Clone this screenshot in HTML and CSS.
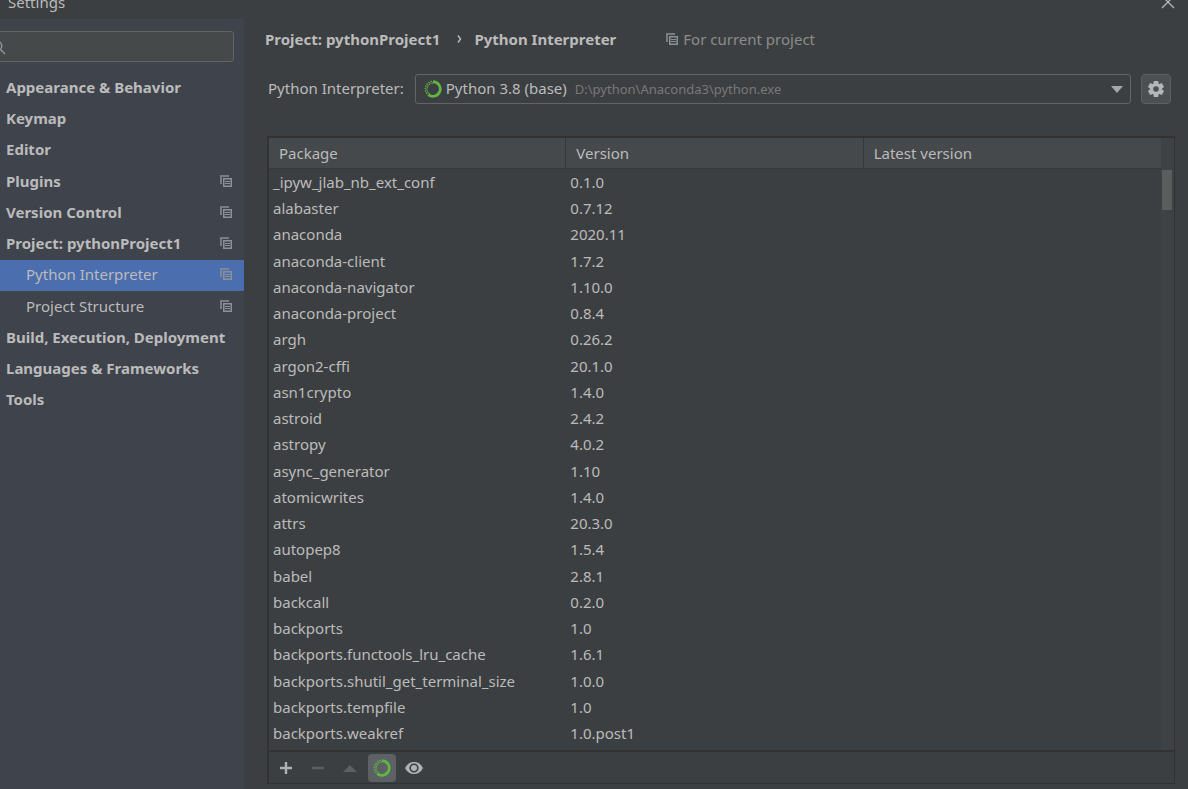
FILE: index.html
```
<!DOCTYPE html>
<html lang="en">
<head>
<meta charset="utf-8">
<title>Settings</title>
<link rel="stylesheet" href="styles.css">
</head>
<body>
<svg class="defs" aria-hidden="true">
  <symbol id="copy" viewBox="0 0 12 12">
    <path d="M0 0h9v2H2v7H0z" opacity=".75"/>
    <path d="M3 3h9v9H3zM4.500 4.500v6h6v-6z" fill-rule="evenodd"/>
    <path d="M5 6h5v1H5zM5 8h5v1H5z"/>
  </symbol>
  <symbol id="ring" viewBox="0 0 18 18">
    <g fill="none" stroke="#62b543">
      <path d="M9 1.700A7.300 7.300 0 1 1 4.500 14.800" stroke-width="2.800"/>
      <path d="M4.200 15A7.700 7.700 0 0 1 9 1.300" stroke-width="1.500" stroke-linecap="round" stroke-dasharray=".1 2.300"/>
      <path d="M5.400 13.800A6 6 0 0 1 9 3" stroke-width="1.300" stroke-linecap="round" stroke-dasharray=".1 1.700"/>
    </g>
  </symbol>
</svg>
<header class="titlebar">
  <h1 class="title">Settings</h1>
  <button class="close" type="button" aria-label="Close"><svg width="14" height="14" viewBox="0 0 14 14"><path d="M1 1l12 12M13 1L1 13" stroke="#b4b7b9" stroke-width="1.300"/></svg></button>
</header>
<div class="window">
  <aside class="sidebar">
    <div class="search">
      <svg class="search-icon" width="16" height="16" viewBox="0 0 16 16" fill="none" stroke="#8b979c" stroke-width="1.500"><circle cx="6" cy="6" r="4.700"/><path d="M9.500 9.500l4.500 4.500"/></svg>
      <input class="search-input" type="text" aria-label="Search settings">
    </div>
    <nav class="nav">
      <a class="item" href="#">Appearance &amp; Behavior</a>
      <a class="item" href="#">Keymap</a>
      <a class="item" href="#">Editor</a>
      <a class="item" href="#">Plugins<svg class="copy"><use href="#copy"/></svg></a>
      <a class="item" href="#">Version Control<svg class="copy"><use href="#copy"/></svg></a>
      <a class="item" href="#">Project: pythonProject1<svg class="copy"><use href="#copy"/></svg></a>
      <a class="item child selected" href="#" aria-current="page">Python Interpreter<svg class="copy"><use href="#copy"/></svg></a>
      <a class="item child" href="#">Project Structure<svg class="copy"><use href="#copy"/></svg></a>
      <a class="item" href="#">Build, Execution, Deployment</a>
      <a class="item" href="#">Languages &amp; Frameworks</a>
      <a class="item" href="#">Tools</a>
    </nav>
  </aside>
  <main class="main">
    <div class="crumbs">
      <a class="crumb" href="#">Project: pythonProject1</a>
      <svg class="chevron" width="5" height="10" viewBox="0 0 5 10"><path d="M1 1.500L3.500 5L1 8.500" fill="none" stroke="#bbb" stroke-width="1.400"/></svg>
      <h2 class="crumb">Python Interpreter</h2>
      <span class="scope"><svg class="copy"><use href="#copy"/></svg>For current project</span>
    </div>
    <div class="interpreter">
      <label class="label" for="interp">Python Interpreter:</label>
      <div class="combo">
        <select class="select" id="interp"><option>Python 3.8 (base)</option></select>
        <svg class="ring combo-ring"><use href="#ring"/></svg>
        <span class="path">D:\python\Anaconda3\python.exe</span>
        <svg class="arrow" width="12" height="7" viewBox="0 0 12 7"><path d="M0 0h12L6 7z" fill="#a4a7a9"/></svg>
      </div>
      <button class="gear" type="button" aria-label="Interpreter settings"><svg width="18" height="18" viewBox="-9 -9 18 18"><g fill="#b4b7b9"><path id="tooth" d="M-2.200-8h4.400l.6 4h-5.600z"/><use href="#tooth" transform="rotate(60)"/><use href="#tooth" transform="rotate(120)"/><use href="#tooth" transform="rotate(180)"/><use href="#tooth" transform="rotate(240)"/><use href="#tooth" transform="rotate(300)"/><circle r="5.800"/></g><circle r="2.800" fill="#4c5052"/></svg></button>
    </div>
    <section class="panel">
      <div class="list">
        <table class="packages">
          <thead><tr><th>Package</th><th>Version</th><th>Latest version</th></tr></thead>
          <tbody>
            <tr><td>_ipyw_jlab_nb_ext_conf</td><td>0.1.0</td><td></td></tr>
            <tr><td>alabaster</td><td>0.7.12</td><td></td></tr>
            <tr><td>anaconda</td><td>2020.11</td><td></td></tr>
            <tr><td>anaconda-client</td><td>1.7.2</td><td></td></tr>
            <tr><td>anaconda-navigator</td><td>1.10.0</td><td></td></tr>
            <tr><td>anaconda-project</td><td>0.8.4</td><td></td></tr>
            <tr><td>argh</td><td>0.26.2</td><td></td></tr>
            <tr><td>argon2-cffi</td><td>20.1.0</td><td></td></tr>
            <tr><td>asn1crypto</td><td>1.4.0</td><td></td></tr>
            <tr><td>astroid</td><td>2.4.2</td><td></td></tr>
            <tr><td>astropy</td><td>4.0.2</td><td></td></tr>
            <tr><td>async_generator</td><td>1.10</td><td></td></tr>
            <tr><td>atomicwrites</td><td>1.4.0</td><td></td></tr>
            <tr><td>attrs</td><td>20.3.0</td><td></td></tr>
            <tr><td>autopep8</td><td>1.5.4</td><td></td></tr>
            <tr><td>babel</td><td>2.8.1</td><td></td></tr>
            <tr><td>backcall</td><td>0.2.0</td><td></td></tr>
            <tr><td>backports</td><td>1.0</td><td></td></tr>
            <tr><td>backports.functools_lru_cache</td><td>1.6.1</td><td></td></tr>
            <tr><td>backports.shutil_get_terminal_size</td><td>1.0.0</td><td></td></tr>
            <tr><td>backports.tempfile</td><td>1.0</td><td></td></tr>
            <tr><td>backports.weakref</td><td>1.0.post1</td><td></td></tr>
          </tbody>
        </table>
        <div class="track"><div class="thumb"></div></div>
      </div>
      <div class="toolbar">
        <button class="tool" type="button" aria-label="Install"><svg width="14" height="14" viewBox="0 0 14 14"><path d="M7 1v12M1 7h12" stroke="#afb1b3" stroke-width="2.400"/></svg></button>
        <button class="tool" type="button" aria-label="Uninstall" disabled><svg width="14" height="14" viewBox="0 0 14 14"><path d="M1 7h12" stroke="#5c5e5f" stroke-width="2.400"/></svg></button>
        <button class="tool" type="button" aria-label="Upgrade" disabled><svg width="14" height="14" viewBox="0 0 14 14"><path d="M0 11l7-7 7 7z" fill="#5c5e5f"/></svg></button>
        <button class="tool on" type="button" aria-label="Use Conda package manager" aria-pressed="true"><svg class="ring"><use href="#ring"/></svg></button>
        <button class="tool" type="button" aria-label="Show early releases"><svg width="18" height="14" viewBox="0 0 18 14"><path d="M0 7C2 3 5 1 9 1s7 2 9 6c-2 4-5 6-9 6S2 11 0 7z" fill="#afb1b3"/><circle cx="9" cy="7" r="3.800" fill="none" stroke="#3c3f41" stroke-width="1.600"/></svg></button>
      </div>
    </section>
  </main>
</div>
</body>
</html>
```
FILE: styles.css
```
* { box-sizing: border-box; }

body {
  margin: 0;
  height: 100vh;
  overflow: hidden;
  display: flex;
  flex-direction: column;
  background: #3c3f41;
  color: #bbbbbb;
  font: 15px/20px "Noto Sans", "Open Sans", sans-serif;
}

button, input, select { font: inherit; color: inherit; }
button { padding: 0; border: 0; background: none; display: flex; align-items: center; justify-content: center; }
a { color: inherit; text-decoration: none; }
svg { display: block; flex: none; }
h1, h2 { margin: 0; font-size: inherit; font-weight: inherit; }

.defs { position: absolute; width: 0; height: 0; }
.copy { width: 12px; height: 12px; fill: #8a9297; }
.ring { width: 18px; height: 18px; }

.titlebar {
  flex: none;
  display: flex;
  align-items: center;
  justify-content: space-between;
  height: 32px;
  margin-top: -13px;
  padding: 0 13px 2px 8px;
}

.window { flex: 1; display: flex; min-height: 0; }

.sidebar { flex: none; width: 244px; padding-top: 12px; background: #3f434c; }
.search { position: relative; margin: 0 10px 11px -10px; }
.search-input {
  display: block;
  width: 100%;
  height: 31px;
  padding: 0 8px 0 28px;
  border: 1px solid #646464;
  border-radius: 3px;
  background: #45494a;
}
.search-icon { position: absolute; left: 1px; top: 9px; }

.item {
  display: flex;
  align-items: center;
  justify-content: space-between;
  height: 31px;
  padding: 0 12px 4px 6px;
  font-weight: 700;
}
.item:nth-child(4n+3) { margin-bottom: 1px; }
.child { padding-left: 26px; font-weight: 400; }
.selected { background: #4b6eaf; }

.main {
  flex: 1;
  min-width: 0;
  display: flex;
  flex-direction: column;
  padding: 9px 13px 5px 23px;
}

.crumbs { display: flex; align-items: center; height: 21px; }
.crumbs .crumb { font-weight: 700; }
.crumbs a { margin-left: -2px; }
.chevron { margin: 0 12px 0 17px; }
.scope { display: flex; align-items: center; gap: 5px; margin-left: 50px; color: #8c8c8c; }

.interpreter { display: flex; align-items: center; gap: 10px; margin: 25px 4px 32px 1px; }
.label { margin-right: 1px; padding-bottom: 2px; }
.combo { position: relative; flex: 1; }
.select {
  display: block;
  width: 100%;
  height: 30px;
  padding: 0 30px 2px;
  border: 1px solid #646464;
  border-radius: 3px;
  background: #3c3f41;
  appearance: none;
}
.combo-ring, .path, .arrow { position: absolute; pointer-events: none; }
.combo-ring { left: 9px; top: 6px; }
.path { left: 160px; top: 5px; font-size: 13px; color: #787878; }
.arrow { right: 8px; top: 12px; }
.gear {
  width: 30px;
  height: 30px;
  border: 1px solid #5e6060;
  border-radius: 4px;
  background: #4c5052;
}

.panel {
  flex: 1;
  min-height: 0;
  display: flex;
  flex-direction: column;
  border: 1px solid #323232;
  border-width: 2px 1px 1px 2px;
}
.list { flex: 1; min-height: 0; overflow: hidden; display: flex; align-items: stretch; }
.packages { width: 100%; align-self: flex-start; table-layout: fixed; border-collapse: separate; border-spacing: 0; }
.packages th {
  height: 31px;
  padding: 0 10px;
  border-bottom: 1px solid #353739;
  background: #45494b;
  font-weight: 400;
  text-align: left;
}
.packages th:not(:last-child) { border-right: 1px solid #35383a; }
.packages td { height: 26px; padding: 3px 4px 0; vertical-align: top; }
.packages tr:nth-child(4n+3) td { height: 27px; }
.track { flex: none; width: 13px; padding: 32px 2px 0 1px; background: #3f4244; }
.thumb { height: 40px; background: #595d5e; }

.toolbar {
  flex: none;
  display: flex;
  align-items: center;
  gap: 4px;
  height: 33px;
  padding-left: 3px;
  border-top: 2px solid #323232;
}
.tool { width: 28px; height: 28px; border-radius: 4px; }
.on { background: #5c6164; }
```
